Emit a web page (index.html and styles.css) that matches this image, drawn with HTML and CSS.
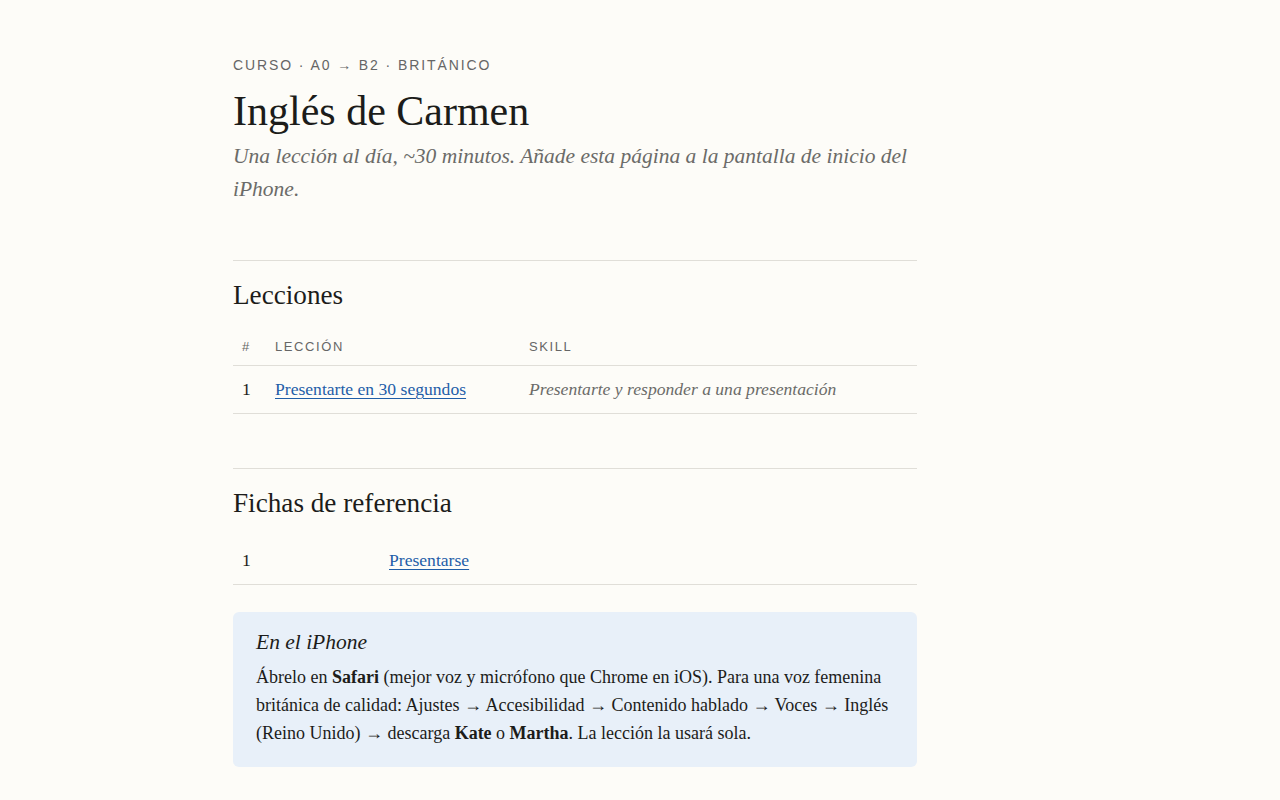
FILE: index.html
```html
<!DOCTYPE html>
<html lang="es">
<head>
<meta charset="utf-8">
<title>Inglés de Carmen</title>
<link rel="stylesheet" href="styles.css">
</head>
<body>
<main class="page">
  <header class="intro">
    <p class="eyebrow">Curso · A0 <span class="arrow">→</span> B2 · Británico</p>
    <h1 class="title">Inglés de Carmen</h1>
    <p class="lede">Una lección al día, ~30 minutos. Añade esta página a la pantalla de inicio del iPhone.</p>
  </header>

  <section class="section">
    <h2 class="section-title">Lecciones</h2>
    <table class="list">
      <thead>
        <tr><th class="col-num">#</th><th class="col-lesson">Lección</th><th>Skill</th></tr>
      </thead>
      <tbody>
        <tr>
          <td class="col-num">1</td>
          <td class="col-lesson"><a href="#">Presentarte en 30 segundos</a></td>
          <td class="skill">Presentarte y responder a una presentación</td>
        </tr>
      </tbody>
    </table>
  </section>

  <section class="section">
    <h2 class="section-title">Fichas de referencia</h2>
    <table class="list cards">
      <tbody>
        <tr>
          <td class="col-num-wide">1</td>
          <td><a href="#">Presentarse</a></td>
        </tr>
      </tbody>
    </table>
  </section>

  <aside class="note">
    <h3 class="note-title">En el iPhone</h3>
    <p class="note-text">Ábrelo en <strong>Safari</strong> (mejor voz y micrófono que Chrome en iOS). Para una voz femenina británica de calidad: Ajustes → Accesibilidad → Contenido hablado → Voces → Inglés (Reino Unido) → descarga <strong>Kate</strong> o <strong>Martha</strong>. La lección la usará sola.</p>
  </aside>
</main>
</body>
</html>
```

FILE: styles.css
```css
html, body {
  margin: 0;
  padding: 0;
  background: #fdfcf8;
}
body {
  font-family: "Liberation Serif", "Times New Roman", serif;
  color: #1c1c1a;
}
.page {
  width: 684px;
  padding: 55px 0 40px 233px;
}
.intro {
  padding-bottom: 54px;
}
.eyebrow {
  margin: 0;
  font-family: "Liberation Sans", Arial, sans-serif;
  font-size: 14px;
  line-height: 20px;
  letter-spacing: 1.9px;
  text-transform: uppercase;
  color: #666;
}
.eyebrow .arrow {
  font-family: "Noto Sans", sans-serif;
  font-size: 14px;
  letter-spacing: 1.9px;
}
.title {
  margin: 10px 0 0;
  font-size: 42px;
  line-height: 52px;
  font-weight: 400;
}
.lede {
  margin: 3px 0 0;
  font-size: 21.5px;
  line-height: 33px;
  font-style: italic;
  color: #6b6b68;
}
.section {
  border-top: 1px solid #e0ded8;
  padding-top: 16px;
  margin-bottom: 54px;
}
.section:last-of-type {
  margin-bottom: 27px;
}
.section-title {
  margin: 0 0 17px;
  font-size: 27.2px;
  line-height: 36px;
  font-weight: 400;
}
.list {
  width: 100%;
  border-collapse: collapse;
  font-size: 17.6px;
}
.list th {
  font-family: "Liberation Sans", Arial, sans-serif;
  font-size: 13px;
  font-weight: 400;
  letter-spacing: 1.6px;
  text-transform: uppercase;
  color: #666;
  text-align: left;
  padding: 9px 9px 11px;
  border-bottom: 1px solid #e0ded8;
}
.list td {
  padding: 12px 9px 12px;
  line-height: 23px;
  border-bottom: 1px solid #e0ded8;
  text-align: left;
  vertical-align: top;
}
.list th.col-num, .list td.col-num {
  width: 15px;
}
.list .col-lesson {
  width: 236px;
}
.list a {
  color: #1f5ea8;
  text-decoration: underline;
  text-underline-offset: 3px;
  text-decoration-thickness: 1px;
}
.skill {
  font-style: italic;
  color: #6b6b68;
}
.cards td {
  padding-top: 11px;
  padding-bottom: 12px;
}
.cards td.col-num-wide {
  width: 129px;
}
.note {
  background: #e8f0f9;
  border-radius: 6px;
  padding: 16px 23px 20px;
}
.note-title {
  margin: 0;
  font-size: 21.5px;
  font-weight: 400;
  font-style: italic;
  line-height: 28px;
}
.note-text {
  margin: 7px 0 0;
  font-size: 18px;
  line-height: 28px;
}
.note-text strong {
  font-weight: 700;
}
```
